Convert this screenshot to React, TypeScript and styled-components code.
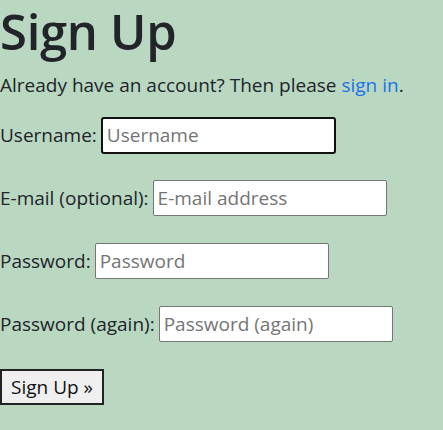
import React from "react"
import styled, { createGlobalStyle } from "styled-components"

const GlobalStyle = createGlobalStyle`
  html, body {
    margin: 0;
    padding: 0;
    background: #b9d7c1;
  }
  body {
    font-family: "Open Sans", "Noto Sans", sans-serif;
    color: #212529;
    height: 430px;
    overflow: hidden;
  }
`

const Page = styled.div`
  display: flex;
  flex-direction: column;
  align-items: flex-start;
`

const Title = styled.h1`
  margin: 0 0 10px;
  padding-top: 2px;
  font-size: 49px;
  font-weight: 600;
  line-height: 58px;
  letter-spacing: -0.3px;
`

const Lead = styled.p`
  margin: 0 0 17px;
  font-size: 19px;
  line-height: 30px;
`

const Link = styled.a`
  color: #1a73e8;
  text-decoration: none;
`

const Form = styled.form`
  display: flex;
  flex-direction: column;
  gap: 27px;
`

const Row = styled.div`
  display: flex;
  align-items: center;
  gap: 4px;
  height: 36px;
`

const Label = styled.label`
  font-size: 19px;
  line-height: 30px;
`

const Field = styled.input<{ $focused?: boolean }>`
  box-sizing: border-box;
  width: ${p => (p.$focused ? "235px" : "234px")};
  height: ${p => (p.$focused ? "37px" : "36px")};
  padding: 0 4px;
  font-family: inherit;
  font-size: 19px;
  color: #212529;
  background: #fff;
  border: ${p => (p.$focused ? "2px solid #111" : "1px solid #767676")};
  border-radius: ${p => (p.$focused ? "3px" : "2px")};
  outline: none;
  &::placeholder {
    color: #757575;
  }
`

const SubmitButton = styled.button`
  box-sizing: border-box;
  width: 104px;
  height: 36px;
  padding: 0 6px;
  font-family: inherit;
  font-size: 19px;
  color: #111;
  background: #efefef;
  border: 2px solid #222;
  cursor: pointer;
`

const fields = [
  { label: "Username:", placeholder: "Username", focused: true },
  { label: "E-mail (optional):", placeholder: "E-mail address" },
  { label: "Password:", placeholder: "Password" },
  { label: "Password (again):", placeholder: "Password (again)" },
]

export default function App() {
  return (
    <Page>
      <GlobalStyle />
      <Title>Sign Up</Title>
      <Lead>
        Already have an account? Then please <Link href="#">sign in</Link>.
      </Lead>
      <Form onSubmit={e => e.preventDefault()}>
        {fields.map(f => (
          <Row key={f.label}>
            <Label>{f.label}</Label>
            <Field $focused={f.focused} placeholder={f.placeholder} />
          </Row>
        ))}
        <Row>
          <SubmitButton type="submit">Sign Up »</SubmitButton>
        </Row>
      </Form>
    </Page>
  )
}
